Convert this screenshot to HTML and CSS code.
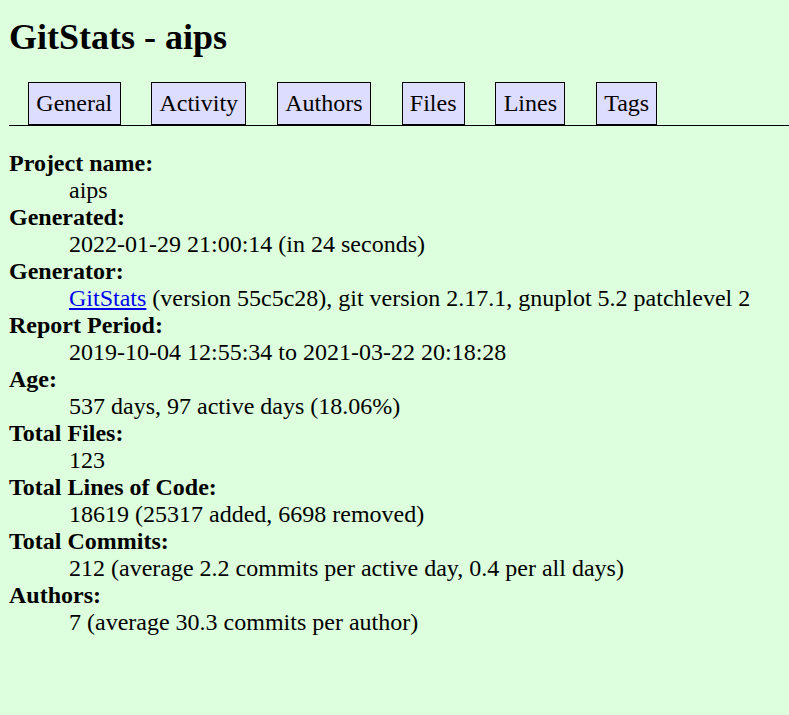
FILE: index.html
```html
<!DOCTYPE html>
<html>
<head>
<meta charset="utf-8">
<title>GitStats - aips</title>
<link rel="stylesheet" href="styles.css">
</head>
<body>
<h1 class="title">GitStats - aips</h1>
<nav class="nav">
  <a class="tab" href="#">General</a>
  <a class="tab" href="#">Activity</a>
  <a class="tab" href="#">Authors</a>
  <a class="tab" href="#">Files</a>
  <a class="tab" href="#">Lines</a>
  <a class="tab" href="#">Tags</a>
</nav>
<dl class="info">
  <dt class="label">Project name</dt>
  <dd class="value">aips</dd>
  <dt class="label">Generated</dt>
  <dd class="value">2022-01-29 21:00:14 (in 24 seconds)</dd>
  <dt class="label">Generator</dt>
  <dd class="value"><a class="link" href="#">GitStats</a> (version 55c5c28), git version 2.17.1, gnuplot 5.2 patchlevel 2</dd>
  <dt class="label">Report Period</dt>
  <dd class="value">2019-10-04 12:55:34 to 2021-03-22 20:18:28</dd>
  <dt class="label">Age</dt>
  <dd class="value">537 days, 97 active days (18.06%)</dd>
  <dt class="label">Total Files</dt>
  <dd class="value">123</dd>
  <dt class="label">Total Lines of Code</dt>
  <dd class="value">18619 (25317 added, 6698 removed)</dd>
  <dt class="label">Total Commits</dt>
  <dd class="value">212 (average 2.2 commits per active day, 0.4 per all days)</dd>
  <dt class="label">Authors</dt>
  <dd class="value">7 (average 30.3 commits per author)</dd>
</dl>
</body>
</html>
```

FILE: styles.css
```css
html, body {
  background-color: #ddffdd;
}

body {
  margin: 0;
  padding: 0 0 0 9px;
  color: black;
  font-family: "Liberation Serif", "Times New Roman", serif;
  font-size: 24px;
  line-height: 27px;
}

.title {
  margin: 17px 0 0;
  font-size: 36px;
  line-height: 41px;
  font-weight: bold;
}

.nav {
  display: flex;
  align-items: flex-end;
  gap: 30.6px;
  height: 43px;
  margin-top: 24px;
  padding-left: 19px;
  border-bottom: 1px solid black;
}

.tab {
  display: block;
  padding: 7px 7.3px;
  border: 1px solid black;
  background-color: #ddddff;
  color: black;
  text-decoration: none;
  line-height: 27px;
}

.info {
  margin: 24px 0 0;
}

.label {
  font-weight: bold;
}

.label::after {
  content: ":";
}

.value {
  margin-left: 60px;
}

.link {
  color: #0000ee;
  text-decoration: underline;
}
```
